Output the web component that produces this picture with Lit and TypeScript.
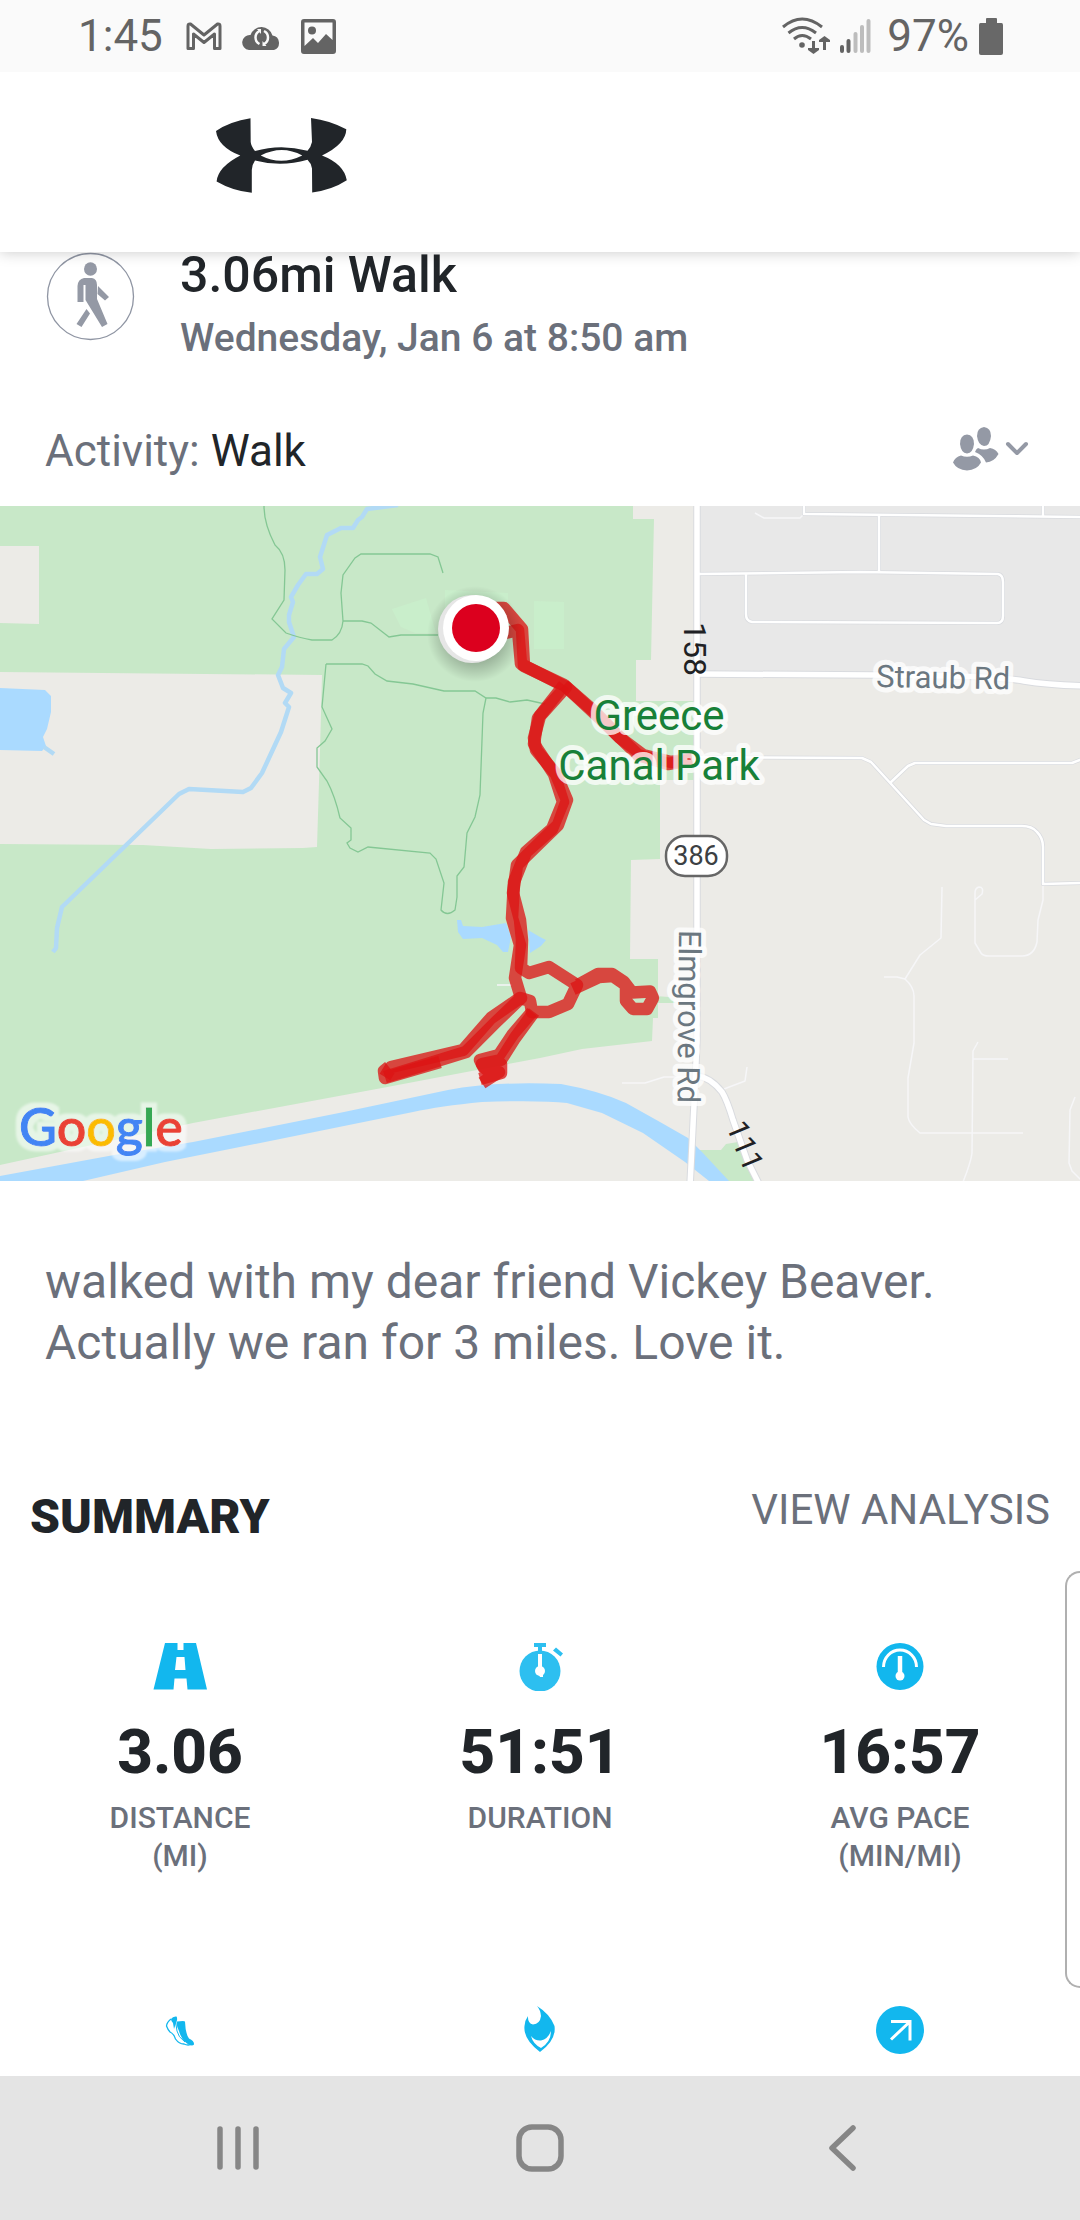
import { LitElement, html, svg, css, nothing, type TemplateResult } from "lit";
import { customElement, property } from "lit/decorators.js";

type Glyph = "road" | "stopwatch" | "gauge" | "shoe" | "flame" | "arrow";

interface Metric {
  icon: Glyph;
  value?: string;
  label?: string;
  unit?: string;
}

const METRICS: Metric[] = [
  { icon: "road", value: "3.06", label: "DISTANCE", unit: "(MI)" },
  { icon: "stopwatch", value: "51:51", label: "DURATION" },
  { icon: "gauge", value: "16:57", label: "AVG PACE", unit: "(MIN/MI)" },
  { icon: "shoe" },
  { icon: "flame" },
  { icon: "arrow" },
];

// All metric glyphs share a 54 x 48 box.
const GLYPHS: Record<Glyph, TemplateResult> = {
  road: svg`
    <path fill="#12b7ee" fill-rule="evenodd" d="M12 0H24.500V7H30.500V0H43L54 46.500H34.500L33.500 35.500H21.500L20.500 46.500H0.500Z M23.500 14L22 27H32.500L31.500 14Z"/>`,
  stopwatch: svg`
    <circle cx="27" cy="28" r="20.500" fill="#2dbff0"/>
    <path fill="#2dbff0" d="M21 0H33V4H29V9H25V4H21Z M43 4.500L50 10.500L47.500 13.500L40 7.500Z"/>
    <path stroke="#fff" stroke-width="4" d="M27 11V28"/>
    <circle cx="27" cy="28" r="5" fill="#fff"/>
    <path fill="#fff" d="M25 30H30V34H27Z"/>`,
  gauge: svg`
    <circle cx="27" cy="23.500" r="23.500" fill="#12b7ee"/>
    <path fill="none" stroke="#fff" stroke-width="3" d="M10.500 24A16.500 17 0 0 1 43.500 24"/>
    <path stroke="#fff" stroke-width="4.500" d="M27 13V32"/>
    <circle cx="27" cy="33" r="4.500" fill="#fff"/>`,
  shoe: svg`
    <path fill="#12b7ee" d="M24 15.500L30 15L32 15.500Q32.500 28 36 32.500Q41.500 35 41 38.500Q39 41 34 37.500Q28 33 26 25Q23 20 24 15.500Z"/>
    <path fill="#12b7ee" d="M18 13Q20 10 23.500 10.500Q25 13 23 17L21 23L20 17Q18 15 18 13Z"/>
    <path fill="none" stroke="#12b7ee" stroke-width="1.300" d="M18 13Q14 16 13.500 20Q15 24 17 26Q21 28 22.500 33Q26 38 31 38Q35 40 39.500 38"/>
    <path fill="none" stroke="#12b7ee" stroke-width="1" d="M22 12L24 25Q25 31 32 36"/>`,
  flame: svg`
    <path fill="#12b7ee" d="M24 0Q37 8 41.500 20Q43.500 34 27 46Q10 33 11.500 20Q12 14 15 10Q14.500 17 20 18.500Q27 18 28 10Q27.500 4 24 0Z"/>
    <path fill="#fff" d="M18 30Q22 35 28 34.500Q35 33 38 25Q38 36 28 42Q20 38 18 30Z"/>`,
  arrow: svg`
    <circle cx="27" cy="24" r="24" fill="#12b7ee"/>
    <path fill="none" stroke="#fff" stroke-width="3" d="M18 15.500H37V34.500M37 15.500L18 33.500"/>`,
};

@customElement("metric-tile")
class MetricTile extends LitElement {
  @property({ attribute: false }) metric!: Metric;

  static styles = css`
    :host {
      display: flex;
      flex-direction: column;
      align-items: center;
      text-align: center;
    }
    .glyph {
      display: block;
      width: 54px;
      height: 48px;
    }
    .value {
      margin-top: 24px;
      font-size: 62px;
      line-height: 74px;
      font-weight: 800;
      color: #212529;
    }
    .label {
      margin-top: 10px;
      font-size: 30px;
      line-height: 38px;
      font-weight: 500;
      color: #6b707b;
    }
    .line {
      display: block;
    }
  `;

  render() {
    const m = this.metric;
    return html`
      <svg class="glyph" viewBox="0 0 54 48" aria-hidden="true">${GLYPHS[m.icon]}</svg>
      ${m.value ? html`<div class="value">${m.value}</div>` : nothing}
      ${m.label
        ? html`<div class="label">
            <span class="line">${m.label}</span>
            ${m.unit ? html`<span class="line">${m.unit}</span>` : nothing}
          </div>`
        : nothing}
    `;
  }
}

@customElement("route-map")
class RouteMap extends LitElement {
  static styles = css`
    :host {
      display: block;
    }
    .map {
      display: block;
      width: 100%;
      height: auto;
      background: #ecebe7;
      font-family: Roboto, sans-serif;
    }
    .park { fill: #c8e8c8; }
    .land { fill: #ecebe7; }
    .urban { fill: #e8e8e8; }
    .meadow { fill: #c9eecb; }
    .water { fill: #aadaff; }
    .stream { fill: none; stroke: #b2daf5; stroke-width: 4.500; stroke-linejoin: round; }
    .trail { fill: none; stroke: #84c794; stroke-width: 1.300; }
    .casing, .road, .lane { fill: none; stroke-linejoin: round; }
    .casing { stroke: #d9dbdf; }
    .road { stroke: #fff; }
    .major { stroke-width: 5.500; }
    .casing.major { stroke-width: 7.500; }
    .minor { stroke-width: 2.500; }
    .casing.minor { stroke-width: 4; }
    .lane { stroke: #f6f6f8; stroke-width: 1.500; }
    .track { fill: none; stroke: #dc1414; stroke-opacity: 0.76; stroke-width: 12.500; stroke-linejoin: round; }
    .halo { paint-order: stroke; stroke: #fff; stroke-opacity: 0.75; stroke-width: 10px; stroke-linejoin: round; }
    .place { font-size: 42px; fill: #188038; text-anchor: middle; }
    .street { font-size: 31px; fill: #6b7780; }
    .number { font-size: 32px; fill: #202124; }
    .ramp { font-size: 30px; fill: #202124; }
    .shield { font-size: 27px; fill: #3c4043; text-anchor: middle; }
    .brand { font-family: Lato, sans-serif; font-size: 52px; font-weight: 500; stroke-width: 1px; }
    .blue { fill: #4285f4; stroke: #4285f4; }
    .red { fill: #ea4335; stroke: #ea4335; }
    .yellow { fill: #fbbc05; stroke: #fbbc05; }
    .green { fill: #34a853; stroke: #34a853; }
  `;

  render() {
    const major = [
      "M697 500V1040L695 1085L690 1186",
      "M697 674L874 675L953 676Q1000 677 1024 681T1085 686",
      "M697 1076Q710 1077 722 1092Q727 1100 733 1120L747 1160L760 1186",
    ];
    const minor = [
      "M804 500V514L1085 517",
      "M1043 500V516",
      "M879 515V573",
      "M697 574L860 572L998 574Q1003 575 1003 582V616Q1003 623 997 623L752 622Q746 621 746 614V573",
      "M697 757L862 758L871 762L924 820L931 824L946 826H1022Q1032 826 1037 832Q1043 838 1043 847V884L1085 883",
      "M890 783L908 766L915 763H1072L1085 758",
    ];
    const lanes = [
      "M804 514L800 518H764L755 513",
      "M1043 883V900L1038 920L1037 942Q1034 956 1022 956H989Q983 956 981 953L975 943V900L982 894Q984 887 979 887Q975 888 975 893V900",
      "M942 887L941 938L920 955L905 979L897 977H884",
      "M905 979Q914 987 914 996V1043L908 1078V1117Q909 1124 920 1133H1023",
      "M978 1042L973 1051L972 1153Q971 1162 963 1182",
      "M973 1059H1008",
      "M1075 1097L1070 1110L1069 1163L1072 1171L1081 1180",
      "M622 1083H645L664 1077H690",
      "M724 1089L745 1081L747 1067",
      "M497 985H512",
    ];
    const trails = [
      "M264 506Q264 524 275 545Q285 553 285 570L284 600L272 619L286 633Q300 638 312 640H332Q342 634 343 621L341 593L343 575L355 558L361 554H430L438 557L443 573",
      "M343 621H362L371 623L389 637L401 635H438",
      "M326 664H362L368 666L375 674L387 681L413 684L444 691H475L486 698H496L510 702L527 700L545 704",
      "M326 664L322 707L332 729L325 741L317 748V767L327 781Q335 796 340 818L351 828V840L347 843L350 848L358 852L368 847L430 853L436 859L444 883L441 910Q447 917 455 910L457 897V876L464 867L467 833L475 817L480 795L483 713L486 698",
    ];
    const tracks = [
      "M484 608H504L522 629L524 666L564 685L595 712L619 737L643 755L671 762L692 759",
      "M484 638L518 630L521 664L566 687L540 716L534 738L536 750L556 774L567 800L558 825L517 865L513 893L520 920L522 940L521 968L529 973L549 967L577 985L568 1004L549 1012L532 1012L530 1001L520 998L491 1018L463 1050L391 1067L385 1077",
      "M564 685L538 718L534 744L554 774L563 802L552 829L526 852L514 882L512 918L520 945L515 978L521 998L496 1022L466 1052L385 1077",
      "M692 760L668 764L638 755L612 730L591 710L564 685",
      "M389 1067L384 1071L385 1078L440 1062",
      "M532 1012L513 1034L499 1055L480 1060L484 1068L501 1064V1073L480 1079",
      "M534 1012L515 1038L501 1060L482 1064L486 1069L499 1072L482 1083",
      "M578 985L598 974L612 974L624 982L632 992.500L650 991.500L653 998L647 1009L633 1009L626 1001L626 985L613 976L599 977L573 989",
    ];
    return html`
      <svg class="map" viewBox="0 506 1080 675" role="img" aria-label="Route map of the walk">
        <defs>
          <radialGradient id="shade">
            <stop offset="0.600" stop-color="#000" stop-opacity="0.220"/>
            <stop offset="1" stop-color="#000" stop-opacity="0"/>
          </radialGradient>
          <filter id="glow" x="-10%" y="-20%" width="120%" height="140%">
            <feMorphology in="SourceAlpha" operator="dilate" radius="5" result="grown"/>
            <feGaussianBlur in="grown" stdDeviation="1" result="soft"/>
            <feFlood flood-color="#fff" flood-opacity="0.550"/>
            <feComposite in2="soft" operator="in" result="plate"/>
            <feMerge>
              <feMergeNode in="plate"/>
              <feMergeNode in="SourceGraphic"/>
            </feMerge>
          </filter>
        </defs>
        <path class="urban" d="M697 506H1080V686L1025 680L950 676L697 673Z"/>
        <path class="park" d="M0 506H633V519H654L653 564L651 660H636V701H694V780H660V859L631 860L630 959H658V1018H653L652 1041L582 1049L540 1058L382 1088L193 1123L0 1165Z"/>
        <path class="park" d="M698 1150H721L726 1144L738 1142L755 1181H725Z M655 996L669 997L676 1003H655Z"/>
        <path class="land" d="M0 546H39V624L0 623Z M0 672L322 675L320 750L317 847L303 848L211 849L143 845L0 844Z"/>
        <path class="meadow" d="M392 609L426 598L436 633H415L401 627Z M445 590L508 593V610H445Z M534 601L564 602V649H534Z"/>
        <path class="water" d="M0 688L45 690L51 696V712L47 729L43 737L46 746L42 751L0 750Z M457 920H461L463 926L482 927L506 923L511 937L508 952H503L497 945L482 938L463 939L458 932Z M528 930L540 937L546 940L541 946L530 953Z"/>
        <path class="water" d="M0 1176L114 1155L193 1142L344 1112L448 1090Q495 1081 561 1084Q600 1091 626 1103L660 1122L688 1138L702 1152L729 1181H709L685 1162L643 1133L602 1113L567 1103Q540 1100 482 1102Q440 1106 413 1112L275 1140L165 1162L83 1181H0Z"/>
        <path class="stream" d="M398 505L367 509L362 517L358 520L353 528L341 528L327 535L320 557L323 569L317 574H306L298 585L291 597L293 602L289 615V622L294 637L284 649L282 667L278 675L283 688L291 693L285 703L289 707L281 732L262 773L251 788L243 792L189 789L179 794L62 907L57 928L56 948L53 952 M44 747L54 754"/>
        ${trails.map((d) => svg`<path class="trail" d=${d}/>`)}
        ${lanes.map((d) => svg`<path class="lane" d=${d}/>`)}
        ${minor.map((d) => svg`<path class="casing minor" d=${d}/>`)}
        ${major.map((d) => svg`<path class="casing major" d=${d}/>`)}
        ${minor.map((d) => svg`<path class="road minor" d=${d}/>`)}
        ${major.map((d) => svg`<path class="road major" d=${d}/>`)}
        ${tracks.map((d) => svg`<path class="track" d=${d}/>`)}

        <circle cx="475" cy="634" r="48" fill="url(#shade)"/>
        <circle cx="472" cy="629" r="34" fill="#e6e6e6"/>
        <circle cx="476" cy="628" r="33" fill="#fff"/>
        <circle cx="476" cy="628" r="24" fill="#dc001e"/>

        <text class="place halo" x="659" y="730">Greece</text>
        <text class="place halo" x="659" y="780">Canal Park</text>
        <text class="street halo" transform="translate(876 687) rotate(1)">Straub Rd</text>
        <text class="street halo" transform="translate(679 930) rotate(90.500)">Elmgrove Rd</text>
        <text class="number" transform="translate(684 622) rotate(90)">158</text>
        <text class="ramp" transform="translate(726 1126) rotate(68)">111</text>
        <rect x="666" y="836" width="61" height="40" rx="19" fill="#fff" stroke="#666" stroke-width="2.500"/>
        <text class="shield" x="696" y="865">386</text>

        <text class="brand" filter="url(#glow)" x="19" y="1146"><tspan class="blue">G</tspan><tspan class="red">o</tspan><tspan class="yellow">o</tspan><tspan class="blue">g</tspan><tspan class="green">l</tspan><tspan class="red">e</tspan></text>
      </svg>
    `;
  }
}

@customElement("app-root")
class AppRoot extends LitElement {
  static styles = css`
    :host {
      display: flex;
      flex-direction: column;
      position: relative;
      min-height: 100vh;
      background: #fff;
      font-family: Roboto, "Liberation Sans", sans-serif;
      color: #212529;
    }
    svg {
      display: block;
      flex: none;
    }
    h1, h2, p {
      margin: 0;
    }
    button {
      display: flex;
      align-items: center;
      justify-content: center;
      padding: 0;
      border: 0;
      background: none;
      color: inherit;
      font: inherit;
    }
    .status {
      display: flex;
      align-items: center;
      justify-content: space-between;
      height: 72px;
      padding: 0 77px 0 78px;
      background: #fafafa;
      color: #646464;
      font-size: 44px;
      line-height: 74px;
    }
    .group {
      display: flex;
      align-items: center;
    }
    .alerts {
      gap: 19px;
    }
    .time {
      margin-right: 4px;
    }
    .signals {
      gap: 10px;
    }
    .charge {
      margin-left: 6px;
    }
    .header {
      display: flex;
      position: relative;
      height: 180px;
      padding-left: 216px;
      align-items: center;
      background: #fff;
      box-shadow: 0 0 14px rgba(0, 0, 0, 0.22);
      clip-path: inset(0 0 -20px 0);
    }
    .logo {
      margin-bottom: 12px;
    }
    .content {
      flex: 1;
    }
    .workout {
      display: flex;
      align-items: flex-start;
      gap: 45px;
      padding: 0 46px;
    }
    .title {
      font-size: 50px;
      line-height: 46px;
      font-weight: 500;
    }
    .date {
      margin-top: 15px;
      font-size: 39px;
      line-height: 50px;
      font-weight: 500;
      color: #6b707b;
    }
    .activity {
      display: flex;
      justify-content: space-between;
      align-items: flex-start;
      padding: 64px 51px 31px 45px;
      font-size: 44px;
      line-height: 48px;
    }
    .muted {
      color: #6b707b;
    }
    .audience {
      color: #9499a5;
    }
    .note {
      padding: 70px 45px 0;
      font-size: 48px;
      line-height: 61px;
      color: #6b707b;
    }
    .summary {
      display: flex;
      justify-content: space-between;
      align-items: flex-start;
      padding: 113px 30px 0;
    }
    .heading {
      font-size: 48px;
      line-height: 62px;
      font-weight: 900;
    }
    .analysis {
      font-size: 42px;
      line-height: 48px;
      color: #6b707b;
      text-decoration: none;
    }
    .metrics {
      display: grid;
      grid-template-columns: repeat(3, 1fr);
      row-gap: 131px;
      padding: 95px 0 22px;
    }
    .edge {
      position: absolute;
      top: 1571px;
      right: 0;
      width: 13px;
      height: 413px;
      border: 2px solid #b0b0b0;
      border-right: 0;
      border-radius: 18px 0 0 18px;
      background: #fff;
    }
    .nav {
      display: flex;
      height: 144px;
      padding: 0 87px;
      background: #e4e4e4;
      color: #868686;
    }
    .key {
      flex: 1;
    }
  `;

  render() {
    return html`
      <div class="status">
        <div class="group alerts">
          <span class="time">1:45</span>
          <svg width="36" height="28" viewBox="0 0 36 28" aria-hidden="true">
            <path fill="none" stroke="#646464" stroke-width="3" stroke-linejoin="round" d="M2 26.500V4Q2 1.500 4.500 2L18 13L31.500 2Q34 1.500 34 4V26.500H28.500V12L18 20.500L7.500 12V26.500Z"/>
          </svg>
          <svg width="41" height="28" viewBox="0 0 41 28" aria-hidden="true">
            <path fill="#646464" d="M8 28A7.500 7.500 0 0 1 9.500 13A11.500 11.500 0 0 1 31.500 13.500A7.500 7.500 0 0 1 33 28Z"/>
            <path fill="none" stroke="#fafafa" stroke-width="2.500" d="M18.500 9Q14.500 11 14.500 15.500T18.500 22M23 9Q27 11 27 15.500T23 22"/>
            <path fill="#fafafa" d="M16 7H20V12Z M25.500 24H21.500V19Z"/>
          </svg>
          <svg width="35" height="35" viewBox="0 0 35 35" aria-hidden="true">
            <path fill="#646464" fill-rule="evenodd" d="M3 0H32Q35 0 35 3V32Q35 35 32 35H3Q0 35 0 32V3Q0 0 3 0Z M3.500 3.500V27L12 19L17 24L25 15L31.500 21V3.500Z"/>
            <circle cx="11" cy="11.500" r="4" fill="#646464"/>
          </svg>
        </div>
        <div class="group signals">
          <svg width="48" height="38" viewBox="0 0 48 38" aria-hidden="true">
            <path fill="none" stroke="#646464" stroke-width="3" d="M1 10Q20 -6 40 10M6.500 16Q20 5 34 16M12 22Q20 15 29 22"/>
            <circle cx="20" cy="28" r="2.800" fill="#646464"/>
            <path fill="#646464" d="M30 24H33V31H37V33L31.500 37L26 33V31H30Z M41 33H44V25H48V23L42.500 19L37 23V25H41Z"/>
          </svg>
          <svg width="31" height="36" viewBox="0 0 31 36" aria-hidden="true">
            <path fill="none" stroke="#646464" stroke-width="4" stroke-linecap="round" d="M2 29V33M8.500 23V33"/>
            <path fill="none" stroke="#bdbdbd" stroke-width="4" stroke-linecap="round" d="M15.500 16V33M22 9V33M28.500 3V33"/>
          </svg>
          <span class="charge">97%</span>
          <svg width="24" height="37" viewBox="0 0 24 37" aria-hidden="true">
            <path fill="#686868" d="M7 1Q7 0 8 0H17Q18 0 18 1V5H22.500Q24 5 24 7V35Q24 37 22 37H2Q0 37 0 35V7Q0 5 1.500 5H7Z"/>
          </svg>
        </div>
      </div>

      <header class="header">
        <svg class="logo" width="132" height="76" viewBox="216 118 132 76" role="img" aria-label="Under Armour">
          <path fill="#212529" fill-rule="evenodd" d="M216 131Q230 121.500 250.500 118.300L250.700 142Q251 146 255 151Q281 143.500 307.500 150.800Q311 147 312 142L311 118Q330 120.500 346.300 129.300Q346 144 322 155.500Q344 164 346.800 180.300Q332 190 312.200 192.500L312 168.500Q311 163 307.500 159.800Q281 167.500 255 160.500Q251.800 165 251.800 170V192.800Q233 191 216.600 181.500Q218 167 240.300 155.600Q218 147 216 131Z M260.700 155.500Q281 166 302.300 155.500Q282 144.500 260.700 155.500Z"/>
        </svg>
      </header>

      <main class="content">
        <section class="workout">
          <svg width="89" height="89" viewBox="0 0 89 89" aria-hidden="true">
            <circle cx="44.500" cy="44.500" r="43" fill="none" stroke="#8f95a3" stroke-width="1.300"/>
            <ellipse cx="44.500" cy="17" rx="6.500" ry="6.800" fill="#9499a5"/>
            <path fill="#9499a5" d="M38 26H46Q51 27 51 33V47L61.500 72L56 75L39.500 48V33H37.500V50H31.500V34Q32 27 38 26Z"/>
            <path fill="#9499a5" d="M52 34L63 45L59 48.500L51.500 42Z M40.500 57L44 61.500L35.500 75L30.500 72Z"/>
          </svg>
          <div>
            <h1 class="title">3.06mi Walk</h1>
            <p class="date">Wednesday, Jan 6 at 8:50 am</p>
          </div>
        </section>

        <section class="activity">
          <p><span class="muted">Activity:</span> Walk</p>
          <button class="audience" type="button" aria-label="Who can see this">
            <svg width="76" height="44" viewBox="0 0 76 44" aria-hidden="true">
              <g fill="currentColor">
                <path d="M31 0Q38 1 38 9Q37 19 31 19Q25 18 24 9Q24 1 31 0Z"/>
                <path d="M25 21Q31 24 37 21Q43 22 45.500 27Q41 35 33 35.500Q30 28 22 25Q23 22 25 21Z"/>
                <path d="M14 7.500Q21 8 21 17Q20 26 14 26.500Q8 26 7 17Q7 8 14 7.500Z"/>
                <path d="M8 28.500Q14 31 20 28.500Q27 30 28 35.500Q24 43 14 43.500Q4 43 0 35.500Q2 30 8 28.500Z"/>
              </g>
              <path fill="none" stroke="currentColor" stroke-width="4" stroke-linecap="round" stroke-linejoin="round" d="M55 17L64 26L73 17"/>
            </svg>
          </button>
        </section>

        <route-map></route-map>

        <p class="note">
          walked with my dear friend Vickey Beaver.<br />Actually we ran for 3 miles. Love it.
        </p>

        <section class="summary">
          <h2 class="heading">SUMMARY</h2>
          <a class="analysis" href="#analysis">VIEW ANALYSIS</a>
        </section>

        <section class="metrics">
          ${METRICS.map((m) => html`<metric-tile .metric=${m}></metric-tile>`)}
        </section>
      </main>

      <div class="edge"></div>

      <nav class="nav">
        <button class="key" type="button" aria-label="Recent apps">
          <svg width="44" height="48" viewBox="0 0 44 48" aria-hidden="true">
            <path fill="none" stroke="currentColor" stroke-width="5.500" stroke-linecap="round" d="M4 5V43M22 5V43M40 5V43"/>
          </svg>
        </button>
        <button class="key" type="button" aria-label="Home">
          <svg width="48" height="48" viewBox="0 0 48 48" aria-hidden="true">
            <rect x="3" y="3" width="42" height="42" rx="13" fill="none" stroke="currentColor" stroke-width="5.500"/>
          </svg>
        </button>
        <button class="key" type="button" aria-label="Back">
          <svg width="28" height="48" viewBox="0 0 28 48" aria-hidden="true">
            <path fill="none" stroke="currentColor" stroke-width="5.500" stroke-linecap="round" stroke-linejoin="round" d="M25 4L4 24L25 44"/>
          </svg>
        </button>
      </nav>
    `;
  }
}
